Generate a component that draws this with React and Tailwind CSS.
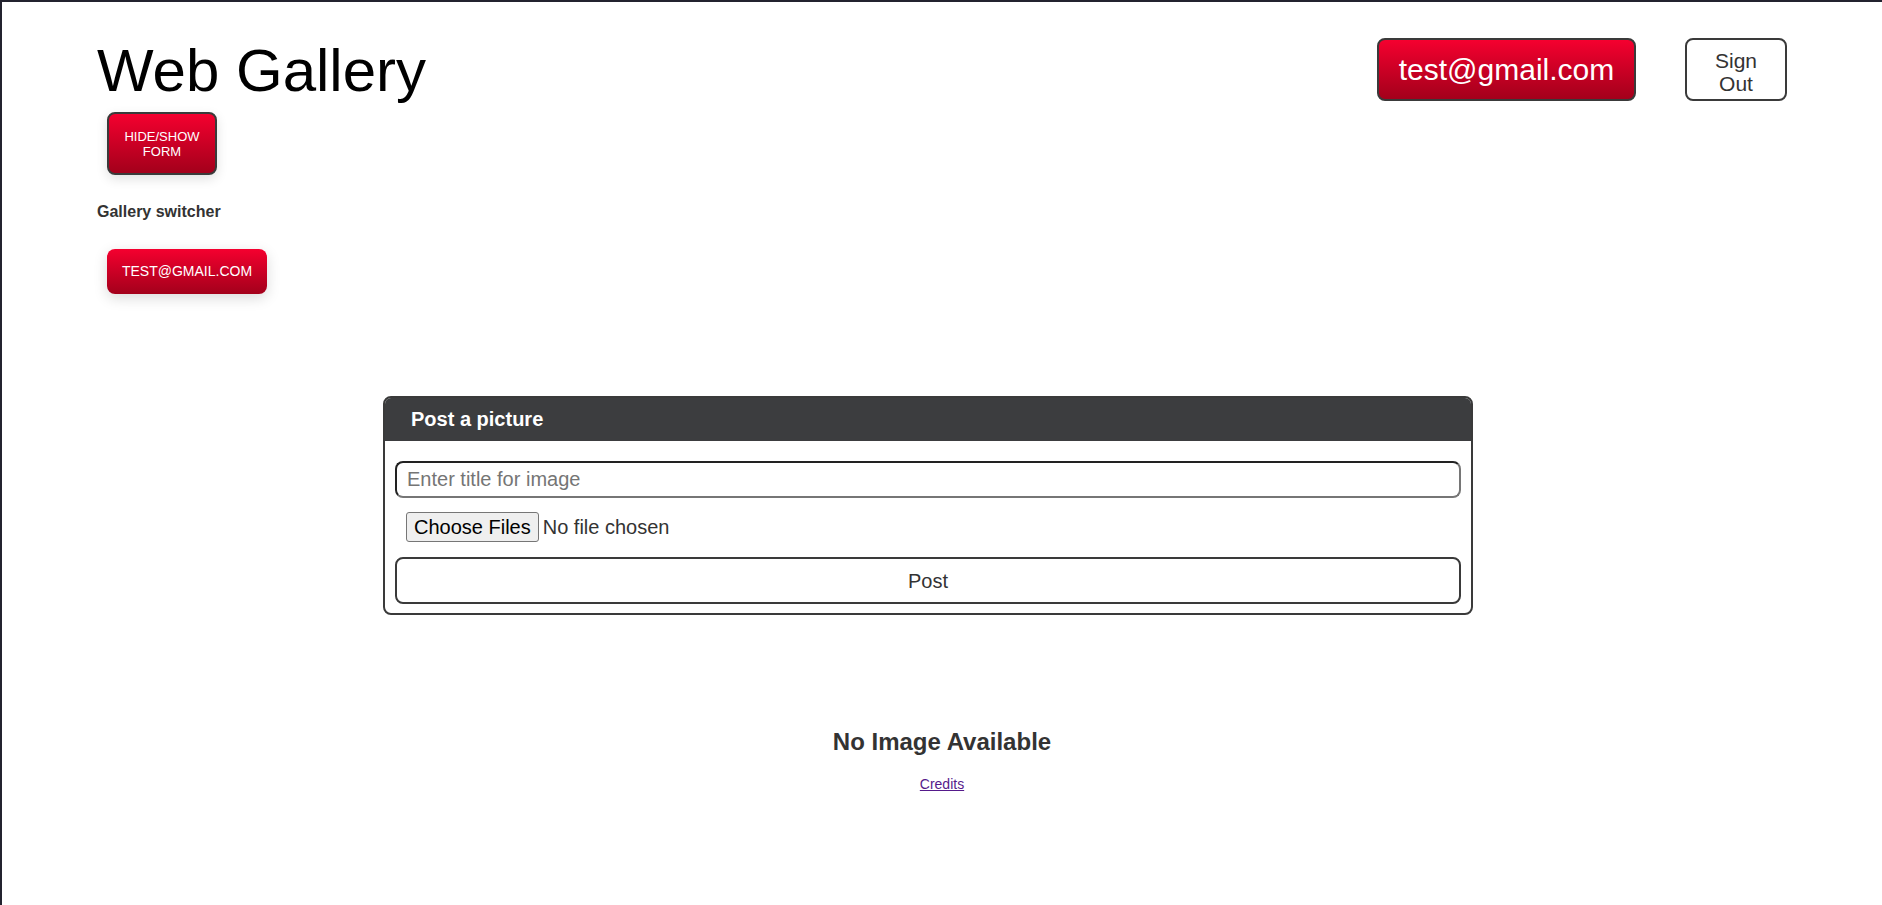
export default function App() {
  return (
    <div className="min-h-[905px] border-l-2 border-t-2 border-[#23232f] bg-white font-['Liberation_Sans',Arial,sans-serif] text-[#333]">
      <div className="flex justify-between pl-[95px] pr-[95px]">
        <div>
          <h1 className="mt-[35px] text-[60px] leading-[68px] text-black">Web Gallery</h1>
          <button className="ml-[10px] mt-[7px] h-[63px] w-[110px] rounded-lg border-2 border-[#3a3a3a] bg-gradient-to-b from-[#f5002f] to-[#a3001b] px-2 text-[13px] leading-[15px] text-white shadow-[0_4px_12px_rgba(0,0,0,0.12)]">
            HIDE/SHOW FORM
          </button>
          <div className="mt-[25px] text-[16px] font-bold">Gallery switcher</div>
          <button className="ml-[10px] mt-[25px] h-[45px] w-[160px] rounded-lg bg-gradient-to-b from-[#f5002f] to-[#a3001b] text-[14px] text-white shadow-[0_4px_14px_rgba(0,0,0,0.15)]">
            TEST@GMAIL.COM
          </button>
        </div>
        <div className="mt-[36px] flex items-start gap-[49px]">
          <button className="h-[63px] w-[259px] rounded-lg border-2 border-[#3a3a3a] bg-gradient-to-b from-[#f5002f] to-[#a3001b] text-[30px] text-white">
            test@gmail.com
          </button>
          <button className="h-[63px] w-[102px] rounded-lg border-2 border-[#3a3a3a] bg-white pt-[4px] text-[21px] leading-[23px] text-[#333]">
            Sign<br />Out
          </button>
        </div>
      </div>

      <form className="ml-[381px] mt-[102px] w-[1090px] overflow-hidden rounded-lg border-2 border-[#3a3a3a]">
        <div className="h-[43px] bg-[#3c3d3f] pl-[26px] text-[20px] font-bold leading-[43px] text-white">
          Post a picture
        </div>
        <div className="px-[10px] pb-[9px] pt-[20px]">
          <input
            placeholder="Enter title for image"
            className="h-[37px] w-full rounded-lg border-2 border-l-[#222] border-t-[#222] border-r-[#767676] border-b-[#767676] px-[10px] text-[20px] text-[#333] placeholder:text-[#757575] outline-none"
          />
          <div className="mt-[14px] flex items-center pl-[11px]">
            <span className="rounded-[3px] border border-[#767676] bg-[#efefef] px-[7px] text-[20px] leading-[28px] text-black">
              Choose Files
            </span>
            <span className="ml-[4px] text-[20px] text-[#333]">No file chosen</span>
          </div>
          <button
            type="button"
            className="mt-[15px] h-[47px] w-full rounded-lg border-2 border-[#3a3a3a] bg-white text-[20px] text-[#333]"
          >
            Post
          </button>
        </div>
      </form>

      <div className="mt-[109px] text-center text-[24px] font-bold">No Image Available</div>
      <div className="mt-[14px] text-center text-[14px]">
        <a href="#" className="text-[#551a8b] underline">Credits</a>
      </div>
    </div>
  );
}
